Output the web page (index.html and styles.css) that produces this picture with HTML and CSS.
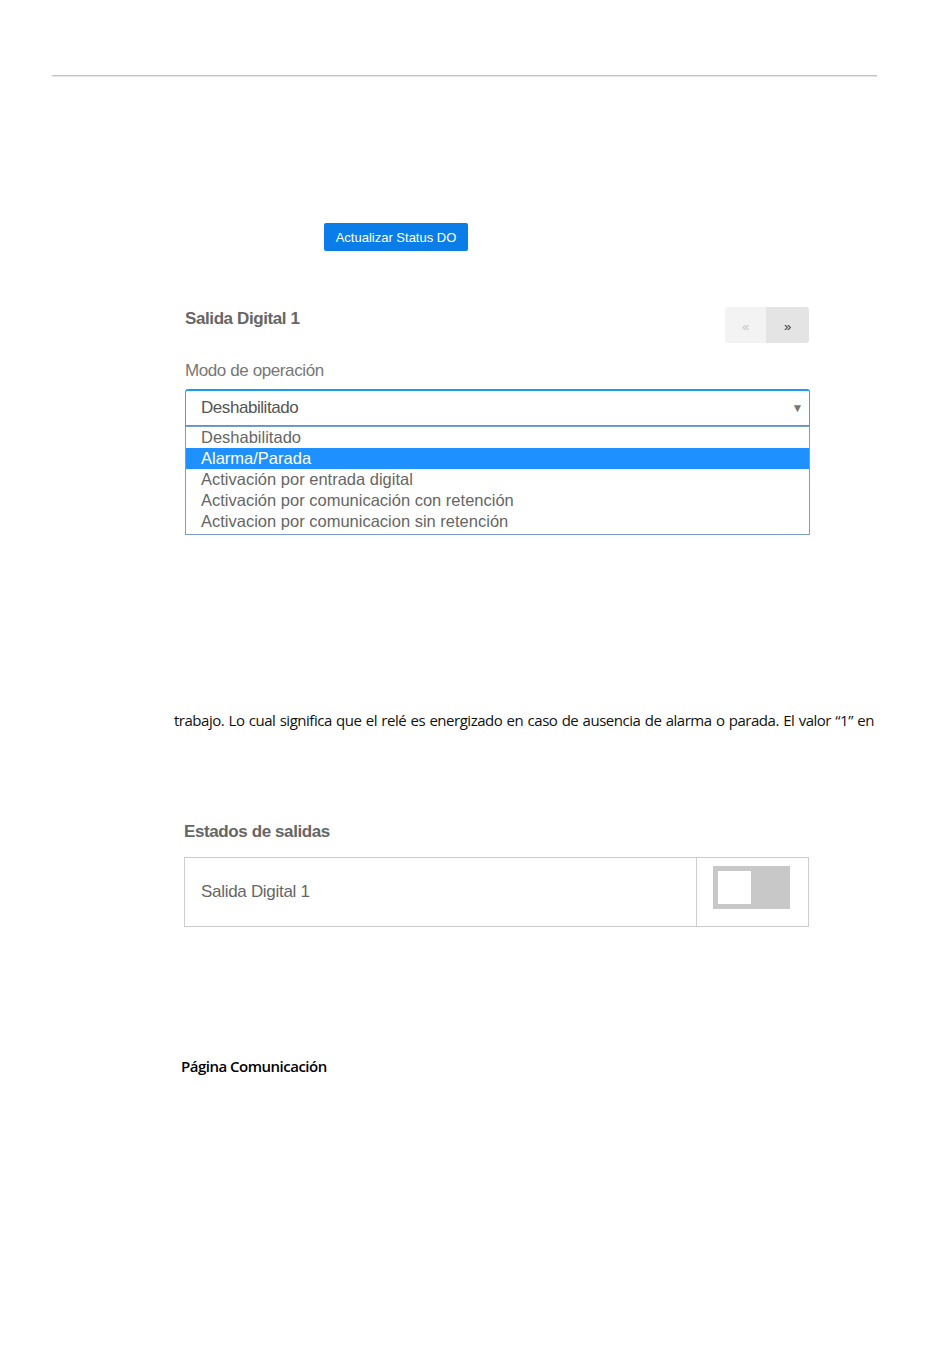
FILE: index.html
```html
<!DOCTYPE html>
<html lang="es">
<head>
  <meta charset="UTF-8" />
  <title>Salidas Digitales</title>
  <link rel="stylesheet" href="styles.css">
</head>
<body>
  <div class="rule"></div>

  <div class="action-row">
    <button class="btn-primary">Actualizar Status DO</button>
  </div>

  <div class="panel">
    <div class="panel-head">
      <div class="panel-title">Salida Digital 1</div>
      <div class="pager">
        <span class="pager-btn prev">&laquo;</span>
        <span class="pager-btn next">&raquo;</span>
      </div>
    </div>

    <div class="field-label">Modo de operación</div>
    <div class="select-box">
      <span>Deshabilitado</span>
      <span class="caret">&#9660;</span>
    </div>
    <ul class="option-list">
      <li>Deshabilitado</li>
      <li class="selected">Alarma/Parada</li>
      <li>Activación por entrada digital</li>
      <li>Activación por comunicación con retención</li>
      <li>Activacion por comunicacion sin retención</li>
    </ul>
  </div>

  <p class="doc-text">trabajo. Lo cual significa que el relé es energizado en caso de ausencia de alarma o parada. El valor “1” en</p>

  <div class="panel status-panel">
    <div class="panel-title">Estados de salidas</div>
    <div class="status-table">
      <div class="status-name">Salida Digital 1</div>
      <div class="status-cell">
        <div class="toggle"><div class="knob"></div></div>
      </div>
    </div>
  </div>

  <h3 class="doc-heading">Página Comunicación</h3>
</body>
</html>
```

FILE: styles.css
```css
* {
  box-sizing: border-box;
  margin: 0;
  padding: 0;
}

body {
  font-family: 'Liberation Sans', Arial, sans-serif;
  background: #fff;
  color: #555;
  width: 950px;
}

.rule {
  margin: 75px 0 0 52px;
  width: 825px;
  height: 2px;
  border-top: 1px solid #c4c4c4;
  border-bottom: 1px solid #e6e6e6;
}

.action-row {
  margin-top: 146px;
  padding-left: 324px;
}

.btn-primary {
  display: block;
  width: 144px;
  height: 28px;
  background: #0a7de8;
  color: #fff;
  border: none;
  border-radius: 2px;
  font-family: 'Liberation Sans', Arial, sans-serif;
  font-size: 13px;
}

.panel {
  margin-left: 185px;
  width: 625px;
}

.panel-head {
  margin-top: 56px;
  display: flex;
  justify-content: space-between;
  align-items: flex-start;
  padding-right: 1px;
}

.panel-title {
  margin-top: 2px;
  font-size: 17px;
  font-weight: bold;
  color: #666;
  letter-spacing: -0.4px;
}

.pager {
  display: flex;
  height: 36px;
  border-radius: 3px;
  overflow: hidden;
}

.pager-btn {
  width: 41px;
  display: flex;
  align-items: center;
  justify-content: center;
  font-size: 13px;
  padding-top: 2px;
}

.pager-btn.prev {
  background: #f3f3f3;
  color: #c4c4c4;
}

.pager-btn.next {
  width: 43px;
  background: #e4e4e4;
  color: #333;
}

.field-label {
  margin-top: 18px;
  font-size: 17px;
  color: #777;
  letter-spacing: -0.4px;
}

.select-box {
  margin-top: 8px;
  height: 37px;
  border: 1px solid #3aa0ea;
  border-top: 2px solid #1e9cf0;
  border-radius: 3px 3px 0 0;
  display: flex;
  justify-content: space-between;
  align-items: center;
  padding: 0 6px 0 15px;
  font-size: 17px;
  color: #555;
  letter-spacing: -0.45px;
}

.caret {
  font-size: 12px;
  color: #777;
}

.option-list {
  list-style: none;
  width: 625px;
  border: 1px solid #7a9cd3;
  padding-bottom: 2px;
}

.option-list li {
  height: 21px;
  line-height: 21px;
  padding-left: 15px;
  font-size: 16.5px;
  color: #666;
}

.option-list li.selected {
  background: #1e90ff;
  color: #fff;
}

.doc-text {
  margin: 175px 0 0 174px;
  width: 710px;
  font-family: 'Open Sans', sans-serif;
  font-size: 15px;
  color: #111;
  letter-spacing: -0.48px;
  word-spacing: 0.9px;
  white-space: nowrap;
}

.status-panel {
  margin-top: 92px;
  margin-left: 184px;
}

.status-table {
  margin-top: 15px;
  display: flex;
  height: 70px;
  border: 1px solid #ccc;
}

.status-name {
  flex: 1;
  display: flex;
  align-items: center;
  padding-left: 16px;
  font-size: 17px;
  color: #666;
  letter-spacing: -0.3px;
  border-right: 1px solid #ccc;
}

.status-cell {
  width: 111px;
  padding: 8px 0 0 16px;
}

.toggle {
  width: 77px;
  height: 43px;
  background: #c8c8c8;
  padding: 5px;
}

.knob {
  width: 33px;
  height: 33px;
  background: #fff;
}

.doc-heading {
  margin: 129px 0 0 181px;
  font-family: 'Open Sans', sans-serif;
  font-size: 15px;
  font-weight: 600;
  color: #000;
  letter-spacing: -0.5px;
}
```
